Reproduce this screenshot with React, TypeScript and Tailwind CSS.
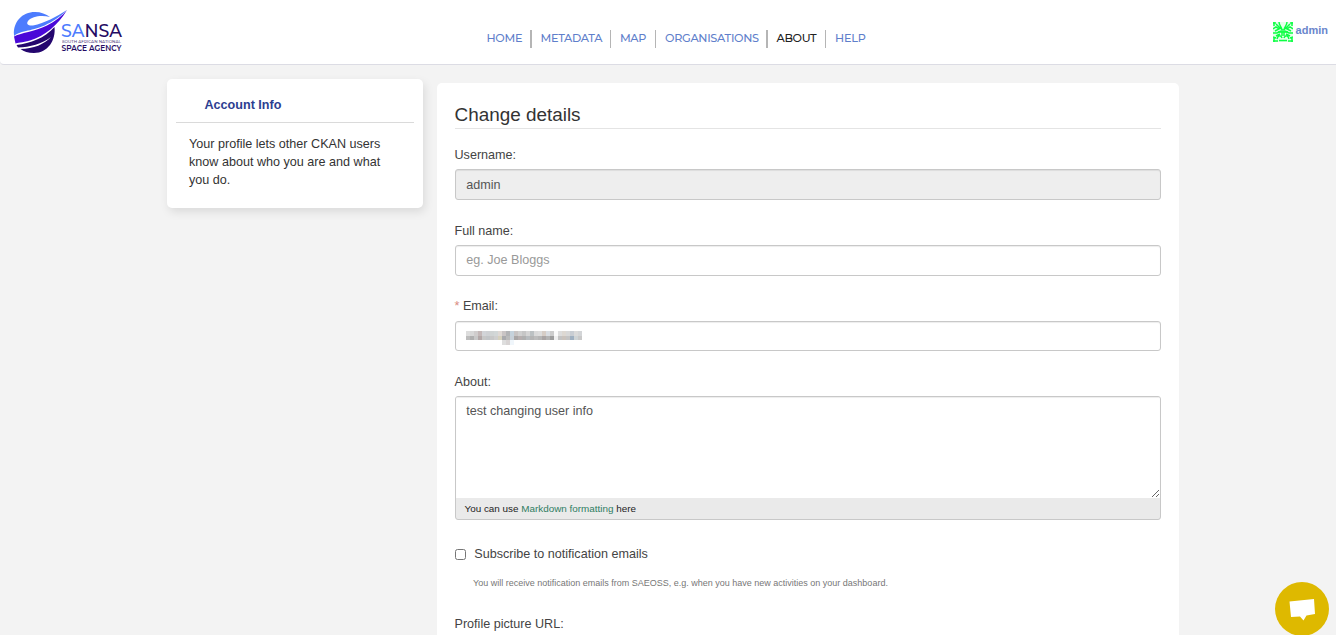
import React from "react";

const nav = [
  { label: "HOME", w: "w-[35.5px]", ls: "tracking-[-0.3px]" },
  { label: "METADATA", w: "w-[61px]", ls: "tracking-[-0.32px]" },
  { label: "MAP", w: "w-[26.5px]", ls: "tracking-[-0.4px]" },
  { label: "ORGANISATIONS", w: "w-[93px]", ls: "tracking-[-0.3px]" },
  { label: "ABOUT", w: "w-[40px]", ls: "tracking-[-0.35px]", active: true },
  { label: "HELP", w: "w-[31px]", ls: "tracking-[-0.2px]" },
];

function Logo() {
  return (
    <svg width="124" height="56" viewBox="0 0 124 56" role="img" aria-label="SANSA">
      <path d="M14 35C13 22 22 12 35 12C41 12 46 14 50 17C42 15 32 16 28 21C26 24 28 26 33 25.500C45 23 56 17 67 10C52 25 36 29 26 31C20 32 16 34 14 36Z" fill="#4d7cfe" />
      <path d="M14 36.500C20 33 35 31.500 47 25.500C55 21.500 62 16 67 10C58 25 45 36 30 40.500C22 42.500 17 43 15.500 43.500Z" fill="#4a08d8" />
      <path d="M16.500 45C30 43.500 45 38 54.500 27C56 40 48 53 34 53C28 53 24 51.500 20.500 49C33 49 45 44 51 37C42 44 30 47 18 47.500Z" fill="#24066e" />
      <g fontFamily="Montserrat, Lato, sans-serif" fill="#250a63">
        <text x="61" y="37" fontSize="18" fontWeight="500" textLength="61" lengthAdjust="spacingAndGlyphs"><tspan fill="#4d7cfe">SA</tspan>NSA</text>
        <text x="62" y="43" fontSize="3.900" fontWeight="500" textLength="59" lengthAdjust="spacingAndGlyphs" opacity=".8">SOUTH AFRICAN NATIONAL</text>
        <text x="61.500" y="51" fontSize="8.200" fontWeight="600" textLength="60" lengthAdjust="spacingAndGlyphs">SPACE AGENCY</text>
      </g>
    </svg>
  );
}

function Avatar() {
  const half = (
    <g fill="none" stroke="#0cff43" strokeWidth="1.500">
      <path d="M0 1H3M1 0V4M0 7L3 5L6 7L2 9M6 0C6 4 9 5 9 8M3 2L8 7M0 11H4L8 9M1 15V20M0 19H5M3 14L7 12M4 17C5 13 8 13 9 16M0 15L3 16" />
      <path d="M5 10H10M9 7V14M6 18.500H10" />
    </g>
  );
  return (
    <svg width="20" height="20" viewBox="0 0 20 20">
      <rect width="20" height="20" fill="#e4ffea" />
      {half}
      <g transform="matrix(-1 0 0 1 20 0)">{half}</g>
    </svg>
  );
}

const mosaic = [
  ["#dddddd", "#d8d8d8", "#d0cdcd", "#c4b8b8", "#d2d4d8", "#cfd1d4", "#d0d4d4", "#d2d7d7", "#dfd9d5", "#c9c4c4", "#b2b3b5", "#c5d2dc", "#c8c4c4", "#d0d0d0", "#c6c6c6", "#d5d5d5", "#bcc1c3", "#dadada", "#dddddd", "#d6cdc6", "#d9dde2", "#cccccc", "#fafafa", "#dddddd", "#ddd8d2", "#d8d8d8", "#c8cdd3", "#dadada", "#d3d5d7"],
  ["#bdbdbd", "#b0b0b0", "#c8c8c8", "#b3a8a8", "#c7c7c7", "#c2c5c8", "#c8c8c8", "#cfcfcf", "#d6d1bd", "#a9aaad", "#bababa", "#c8d0d8", "#a9a6a6", "#b7afaf", "#b0b0b0", "#b8bcbf", "#b5b5b5", "#bdbdbd", "#b6b6b6", "#aaa5a5", "#b4b4b4", "#9d9d9d", "#efefef", "#c4c4c4", "#cac3bd", "#c4c4c4", "#9fb0c1", "#ced4d6", "#c9c9c9"],
  ["", "", "", "", "", "", "", "", "", "#dedede", "#d8d4d4", "#f0f6fb"],
];

function Field({ label, required, children }: { label: string; required?: boolean; children: React.ReactNode }) {
  return (
    <div>
      <div className={`-ml-[0.5px] h-[24px] leading-[18px] ${required ? "" : "pt-px"}`}>
        {required && <span className="text-[#d98b80] mr-[3.5px]">*</span>}
        {label}
      </div>
      {children}
    </div>
  );
}

const box = "w-full border border-[#c8c8c8] rounded-[3px] shadow-[inset_0_1px_1px_rgba(0,0,0,0.075)] px-[10.250px] text-[12.600px] text-[#555] outline-none";

export default function App() {
  return (
    <div className="h-[635px] overflow-hidden bg-[#f3f3f3] text-[12.600px] text-[#444] font-['Liberation_Sans',Arial,sans-serif]">
      <header className="flex h-[65px] justify-between rounded-bl-[4px] border-b border-[#dcdce4] bg-white">
        <div className="flex">
          <Logo />
          <nav className="ml-[362.5px] mt-[29px] flex h-[19px] items-center font-['Montserrat',Inter,sans-serif] text-[11.250px] font-medium">
            {nav.map((n, i) => (
              <React.Fragment key={n.label}>
                {i > 0 && <span className="ml-[8px] mr-[9px] h-[18px] w-[1.500px] shrink-0 bg-[#b5b5b5]" />}
                <a className={`${n.w} ${n.ls} whitespace-nowrap ${n.active ? "text-[#222]" : "text-[#5f7fcb]"}`}>{n.label}</a>
              </React.Fragment>
            ))}
          </nav>
        </div>
        <div className="flex h-[20px] mt-[22px] mr-[8px] gap-[3px]">
          <Avatar />
          <span className="text-[11px] font-bold leading-[17px] text-[#6a86cc]">admin</span>
        </div>
      </header>

      <main className="flex items-start pl-[167px]">
        <aside className="mt-[14px] h-[129px] w-[256px] rounded-[5px] bg-white px-[9px] shadow-[2px_4px_10px_rgba(0,0,0,0.1)]">
          <h2 className="h-[44px] border-b border-[#dadada] pl-[28.5px] pt-[17px] font-bold leading-[18px] text-[#2c3e91]">Account Info</h2>
          <p className="pl-[13px] pr-[20px] pt-[12px] leading-[18px] text-[#333]">Your profile lets other CKAN users know about who you are and what you do.</p>
        </aside>
        <section className="ml-[14px] mt-[18px] w-[742px] rounded-t-[5px] bg-white px-[18px] pb-[30px] pt-[20px]">
          <h1 className="h-[26px] border-b border-[#e4e4e4] text-[18.900px] leading-[24px] text-[#333]"><span className="-ml-[0.5px]">Change details</span></h1>
          <div className="mt-[16px] flex flex-col">
            <div className="h-[76px]"><Field label="Username:"><input className={`${box} h-[31px] bg-[#eee]`} readOnly defaultValue="admin" /></Field></div>
            <div className="h-[76px]"><Field label="Full name:"><input className={`${box} h-[31px] pb-[2px] placeholder:text-[#999]`} placeholder="eg. Joe Bloggs" /></Field></div>
            <div className="h-[75px]">
              <Field label="Email:" required>
                <div className={`${box} flex h-[30px] items-start pt-[9px]`}>
                  <svg width="116" height="14" viewBox="0 0 116 13.500" preserveAspectRatio="none" shapeRendering="crispEdges">
                    {mosaic.map((r, y) => r.map((c, x) => c && <rect key={`${x}-${y}`} x={x * 4} y={y * 4.5} width="4" height="4.500" fill={c} />))}
                  </svg>
                </div>
              </Field>
            </div>
            <Field label="About:">
              <div className="h-[124px] overflow-hidden rounded-[3px] border border-[#c8c8c8] bg-[#eaeaea]">
                <textarea className="block h-[101px] w-full resize-y bg-white px-[10.250px] py-[5px] leading-[18px] text-[#555] shadow-[inset_0_1px_1px_rgba(0,0,0,0.075)] outline-none" defaultValue="test changing user info" />
                <div className="pl-[8.5px] text-[9.900px] leading-[21px] text-[#222]">You can use <a className="text-[#2f7d62]">Markdown formatting</a> here</div>
              </div>
            </Field>
            <label className="mt-[25px] flex h-[18px] items-center">
              <input type="checkbox" className="m-0 mr-[8.250px] size-[11px] appearance-none rounded-[2.500px] border border-[#767676]" />
              Subscribe to notification emails
            </label>
            <p className="ml-[18px] mt-[12px] h-[17px] text-[9px] leading-[16px] text-[#777]">You will receive notification emails from SAEOSS, e.g. when you have new activities on your dashboard.</p>
            <div className="-ml-[0.5px] mt-[23px] leading-[18px]">Profile picture URL:</div>
          </div>
        </section>
      </main>

      <button aria-label="Chat" className="fixed left-[1275px] top-[582px] flex size-[54px] items-center justify-center rounded-full bg-[#deb900]">
        <svg width="54" height="54" viewBox="0 0 54 54"><path d="M14.500 19.500L39 17L40 32L31.500 33.500L28.500 38.500L25 34.500L16 35Z" fill="#fff" /></svg>
      </button>
    </div>
  );
}
